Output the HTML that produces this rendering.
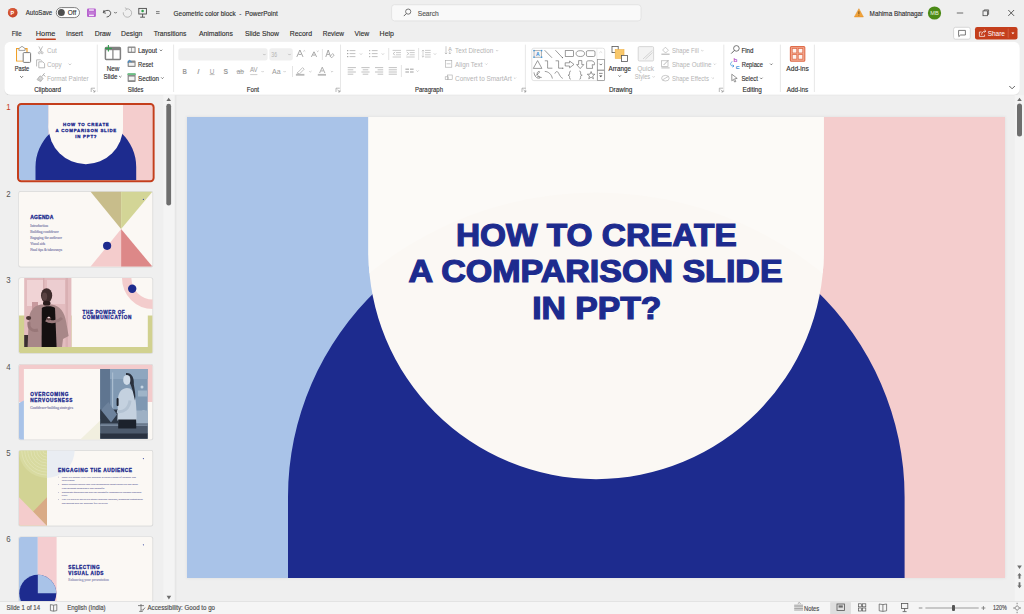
<!DOCTYPE html>
<html><head><meta charset="utf-8"><title>PowerPoint</title>
<style>
html,body{margin:0;padding:0;width:1024px;height:614px;overflow:hidden;background:#efefef;}
svg{display:block;font-family:"Liberation Sans",sans-serif;}
</style></head>
<body>
<svg width="1024" height="614" viewBox="0 0 1024 614">
<defs><filter id="rsh" x="-2%" y="-20%" width="104%" height="150%"><feDropShadow dx="0" dy="0.6" stdDeviation="0.7" flood-color="#000" flood-opacity="0.18"/></filter><filter id="ssh" x="-2%" y="-2%" width="104%" height="104%"><feGaussianBlur stdDeviation="0.8"/></filter><filter id="tsh" x="-5%" y="-5%" width="110%" height="112%"><feGaussianBlur stdDeviation="0.6"/></filter><radialGradient id="pplg" cx="0.35" cy="0.3" r="0.8"><stop offset="0" stop-color="#ff8a5c" stop-opacity="0.5"/><stop offset="1" stop-color="#b8321a" stop-opacity="0.2"/></radialGradient><clipPath id="archclip"><rect x="187.0" y="117.0" width="818.0" height="461.0"/></clipPath><clipPath id="topclip"><path d="M300,100 L900,100 L892,348.4 A359,359 0 0 0 300,348.4 Z"/></clipPath><clipPath id="c5l"><rect x="19" y="450" width="28" height="80"/></clipPath><clipPath id="tc0"><rect x="19.0" y="105.0" width="133.6" height="75.2" rx="1.5"/></clipPath><clipPath id="tc1"><rect x="19.0" y="191.6" width="133.6" height="75.2" rx="2"/></clipPath><clipPath id="tc2"><rect x="19.0" y="278.0" width="133.6" height="75.2" rx="2"/></clipPath><clipPath id="tc3"><rect x="19.0" y="364.5" width="133.6" height="75.2" rx="2"/></clipPath><clipPath id="tc4"><rect x="19.0" y="450.6" width="133.6" height="75.2" rx="2"/></clipPath><clipPath id="tc5"><rect x="19.0" y="537.0" width="133.6" height="64.79999999999995" rx="2"/></clipPath></defs>
<rect x="0.00" y="0.00" width="1024.00" height="614.00" rx="0" fill="#efefef" />
<circle cx="12.70" cy="12.70" r="4.80" fill="#c9472a" />
<circle cx="12.70" cy="12.70" r="4.80" fill="url(#pplg)" />
<text x="10.60" y="14.77" textLength="3.60" lengthAdjust="spacingAndGlyphs" xml:space="preserve" font-family="Liberation Sans" font-size="5.2" font-weight="bold" fill="#ffffff" >P</text>
<text x="25.80" y="15.29" textLength="26.40" lengthAdjust="spacingAndGlyphs" xml:space="preserve" font-family="Liberation Sans" font-size="7.2" font-weight="normal" fill="#303030" stroke="#303030" stroke-width="0.14">AutoSave</text>
<rect x="56.30" y="7.60" width="23.20" height="10.00" rx="5" fill="#ffffff" stroke="#5f5f5f" stroke-width="0.8"/>
<circle cx="61.30" cy="12.60" r="3.50" fill="#4f4f4f" />
<text x="67.80" y="15.25" textLength="8.40" lengthAdjust="spacingAndGlyphs" xml:space="preserve" font-family="Liberation Sans" font-size="6.8" font-weight="normal" fill="#303030" stroke="#303030" stroke-width="0.14">Off</text>
<rect x="87.00" y="8.40" width="8.90" height="8.60" rx="1.2" fill="#b763cf" />
<rect x="89.00" y="9.30" width="4.90" height="1.50" rx="0" fill="#f1dcf7" />
<rect x="88.20" y="11.50" width="6.50" height="2.50" rx="0" fill="#c27cd6" />
<rect x="89.00" y="14.60" width="4.90" height="1.50" rx="0" fill="#f6e8f9" />
<path d="M104.2,10.0 L103.2,12.6 L105.9,13.2" fill="none" stroke="#4a4a4a" stroke-width="0.9" />
<path d="M103.4,12.4 C106.0,9.2 111.4,9.8 110.6,13.8 C110.2,15.8 108.6,16.8 106.6,17.0" fill="none" stroke="#4a4a4a" stroke-width="0.9" />
<path d="M114.20,11.95 L115.50,13.25 L116.80,11.95" fill="none" stroke="#4a4a4a" stroke-width="0.8" />
<path d="M126.7,8.9 A4.2,4.2 0 1 1 123.3,12.3" fill="none" stroke="#a9a9a9" stroke-width="0.8" />
<path d="M124.9,7.7 L126.8,8.9 L125.3,10.6" fill="none" stroke="#a9a9a9" stroke-width="0.8" />
<rect x="138.80" y="8.40" width="7.60" height="5.60" rx="0" fill="none" stroke="#4a4a4a" stroke-width="0.9"/>
<circle cx="142.60" cy="11.00" r="1.30" fill="#2e9e4a" />
<line x1="142.60" y1="14.00" x2="142.60" y2="17.00" stroke="#4a4a4a" stroke-width="0.9" />
<line x1="140.20" y1="17.20" x2="145.00" y2="17.20" stroke="#4a4a4a" stroke-width="0.9" />
<line x1="156.00" y1="11.60" x2="159.60" y2="11.60" stroke="#4a4a4a" stroke-width="0.7" />
<line x1="156.00" y1="13.40" x2="159.60" y2="13.40" stroke="#4a4a4a" stroke-width="0.7" />
<text x="173.60" y="15.79" textLength="104.20" lengthAdjust="spacingAndGlyphs" xml:space="preserve" font-family="Liberation Sans" font-size="7.2" font-weight="normal" fill="#303030" stroke="#303030" stroke-width="0.14">Geometric color block  -  PowerPoint</text>
<rect x="391.60" y="4.70" width="249.40" height="16.20" rx="3" fill="#f9f9f9" stroke="#dcdcdc" stroke-width="0.7"/>
<circle cx="408.20" cy="11.60" r="2.60" fill="none" stroke="#555" stroke-width="0.8"/>
<line x1="406.30" y1="13.60" x2="403.80" y2="16.10" stroke="#555" stroke-width="0.9" />
<text x="417.70" y="15.52" textLength="21.10" lengthAdjust="spacingAndGlyphs" xml:space="preserve" font-family="Liberation Sans" font-size="7.0" font-weight="normal" fill="#555555" stroke="#555555" stroke-width="0.14">Search</text>
<path d="M858.9,8.7 L863.4,16.9 L854.4,16.9 Z" fill="#f2a33a" stroke="#e08a1e" stroke-width="0.5" />
<line x1="858.90" y1="11.30" x2="858.90" y2="14.30" stroke="#5a3a10" stroke-width="0.8" />
<circle cx="858.90" cy="15.60" r="0.45" fill="#5a3a10" />
<text x="869.60" y="15.69" textLength="53.60" lengthAdjust="spacingAndGlyphs" xml:space="preserve" font-family="Liberation Sans" font-size="7.2" font-weight="normal" fill="#303030" stroke="#303030" stroke-width="0.14">Mahima Bhatnagar</text>
<circle cx="934.50" cy="13.00" r="6.60" fill="#4b8a16" />
<text x="930.30" y="15.12" textLength="8.40" lengthAdjust="spacingAndGlyphs" xml:space="preserve" font-family="Liberation Sans" font-size="5.6" font-weight="normal" fill="#e8f3df" >MB</text>
<line x1="956.80" y1="13.00" x2="963.20" y2="13.00" stroke="#4a4a4a" stroke-width="0.8" />
<rect x="983.00" y="10.90" width="4.60" height="4.80" rx="0" fill="none" stroke="#4a4a4a" stroke-width="0.8"/>
<path d="M984.2,10.9 L984.2,9.9 L988.6,9.9 L988.6,14.4 L987.6,14.4" fill="none" stroke="#4a4a4a" stroke-width="0.8" />
<line x1="1008.30" y1="10.00" x2="1014.10" y2="15.90" stroke="#4a4a4a" stroke-width="0.9" />
<line x1="1014.10" y1="10.00" x2="1008.30" y2="15.90" stroke="#4a4a4a" stroke-width="0.9" />
<text x="11.70" y="36.26" textLength="10.00" lengthAdjust="spacingAndGlyphs" xml:space="preserve" font-family="Liberation Sans" font-size="7.4" font-weight="normal" fill="#303030" stroke="#303030" stroke-width="0.14">File</text>
<text x="35.80" y="36.26" textLength="19.50" lengthAdjust="spacingAndGlyphs" xml:space="preserve" font-family="Liberation Sans" font-size="7.4" font-weight="normal" fill="#303030" stroke="#303030" stroke-width="0.14">Home</text>
<text x="66.00" y="36.26" textLength="17.00" lengthAdjust="spacingAndGlyphs" xml:space="preserve" font-family="Liberation Sans" font-size="7.4" font-weight="normal" fill="#303030" stroke="#303030" stroke-width="0.14">Insert</text>
<text x="94.70" y="36.26" textLength="16.10" lengthAdjust="spacingAndGlyphs" xml:space="preserve" font-family="Liberation Sans" font-size="7.4" font-weight="normal" fill="#303030" stroke="#303030" stroke-width="0.14">Draw</text>
<text x="121.00" y="36.26" textLength="21.30" lengthAdjust="spacingAndGlyphs" xml:space="preserve" font-family="Liberation Sans" font-size="7.4" font-weight="normal" fill="#303030" stroke="#303030" stroke-width="0.14">Design</text>
<text x="153.70" y="36.26" textLength="32.70" lengthAdjust="spacingAndGlyphs" xml:space="preserve" font-family="Liberation Sans" font-size="7.4" font-weight="normal" fill="#303030" stroke="#303030" stroke-width="0.14">Transitions</text>
<text x="199.00" y="36.26" textLength="33.80" lengthAdjust="spacingAndGlyphs" xml:space="preserve" font-family="Liberation Sans" font-size="7.4" font-weight="normal" fill="#303030" stroke="#303030" stroke-width="0.14">Animations</text>
<text x="245.00" y="36.26" textLength="34.00" lengthAdjust="spacingAndGlyphs" xml:space="preserve" font-family="Liberation Sans" font-size="7.4" font-weight="normal" fill="#303030" stroke="#303030" stroke-width="0.14">Slide Show</text>
<text x="289.80" y="36.26" textLength="22.20" lengthAdjust="spacingAndGlyphs" xml:space="preserve" font-family="Liberation Sans" font-size="7.4" font-weight="normal" fill="#303030" stroke="#303030" stroke-width="0.14">Record</text>
<text x="322.70" y="36.26" textLength="21.30" lengthAdjust="spacingAndGlyphs" xml:space="preserve" font-family="Liberation Sans" font-size="7.4" font-weight="normal" fill="#303030" stroke="#303030" stroke-width="0.14">Review</text>
<text x="354.60" y="36.26" textLength="14.60" lengthAdjust="spacingAndGlyphs" xml:space="preserve" font-family="Liberation Sans" font-size="7.4" font-weight="normal" fill="#303030" stroke="#303030" stroke-width="0.14">View</text>
<text x="379.60" y="36.26" textLength="14.40" lengthAdjust="spacingAndGlyphs" xml:space="preserve" font-family="Liberation Sans" font-size="7.4" font-weight="normal" fill="#303030" stroke="#303030" stroke-width="0.14">Help</text>
<rect x="36.10" y="38.60" width="19.90" height="1.40" rx="0.7" fill="#c43e1c" />
<rect x="953.60" y="27.30" width="16.70" height="11.90" rx="2" fill="#ffffff" stroke="#c9c9c9" stroke-width="0.7"/>
<path d="M958.6,30.4 L965.4,30.4 L965.4,35.0 L960.6,35.0 L958.8,36.6 L958.8,35.0 L958.6,35.0 Z" fill="none" stroke="#444" stroke-width="0.7" />
<rect x="975.00" y="27.00" width="42.50" height="12.50" rx="2.2" fill="#c43e1c" />
<path d="M981.6,32.0 L979.4,32.0 L979.4,36.4 L984.6,36.4 L984.6,34.6" fill="none" stroke="#ffffff" stroke-width="0.7" />
<path d="M981.6,34.8 C981.8,32.2 983.2,31.2 985.6,31.2 M984.4,29.8 L985.8,31.2 L984.4,32.6" fill="none" stroke="#ffffff" stroke-width="0.7" />
<text x="987.70" y="36.06" textLength="17.30" lengthAdjust="spacingAndGlyphs" xml:space="preserve" font-family="Liberation Sans" font-size="7.4" font-weight="normal" fill="#ffffff" >Share</text>
<line x1="1008.20" y1="28.60" x2="1008.20" y2="37.80" stroke="#d9735a" stroke-width="0.6" />
<path d="M1011.4,32.6 L1012.9,34.2 L1014.4,32.6 Z" fill="#ffffff" stroke="none" stroke-width="1" />
<rect x="4.4" y="41.7" width="1015.4" height="53.1" rx="6" fill="#ffffff" filter="url(#rsh)"/>
<line x1="97.30" y1="44.60" x2="97.30" y2="92.00" stroke="#e1e1e1" stroke-width="0.8" />
<line x1="173.60" y1="44.60" x2="173.60" y2="92.00" stroke="#e1e1e1" stroke-width="0.8" />
<line x1="340.50" y1="44.60" x2="340.50" y2="92.00" stroke="#e1e1e1" stroke-width="0.8" />
<line x1="525.40" y1="44.60" x2="525.40" y2="92.00" stroke="#e1e1e1" stroke-width="0.8" />
<line x1="723.80" y1="44.60" x2="723.80" y2="92.00" stroke="#e1e1e1" stroke-width="0.8" />
<line x1="780.40" y1="44.60" x2="780.40" y2="92.00" stroke="#e1e1e1" stroke-width="0.8" />
<line x1="814.40" y1="44.60" x2="814.40" y2="92.00" stroke="#e1e1e1" stroke-width="0.8" />
<text x="34.20" y="92.12" textLength="26.90" lengthAdjust="spacingAndGlyphs" xml:space="preserve" font-family="Liberation Sans" font-size="7.0" font-weight="normal" fill="#303030" stroke="#303030" stroke-width="0.14">Clipboard</text>
<text x="127.70" y="92.12" textLength="15.70" lengthAdjust="spacingAndGlyphs" xml:space="preserve" font-family="Liberation Sans" font-size="7.0" font-weight="normal" fill="#303030" stroke="#303030" stroke-width="0.14">Slides</text>
<text x="246.70" y="92.12" textLength="12.40" lengthAdjust="spacingAndGlyphs" xml:space="preserve" font-family="Liberation Sans" font-size="7.0" font-weight="normal" fill="#303030" stroke="#303030" stroke-width="0.14">Font</text>
<text x="415.00" y="92.12" textLength="28.00" lengthAdjust="spacingAndGlyphs" xml:space="preserve" font-family="Liberation Sans" font-size="7.0" font-weight="normal" fill="#303030" stroke="#303030" stroke-width="0.14">Paragraph</text>
<text x="609.00" y="92.12" textLength="23.40" lengthAdjust="spacingAndGlyphs" xml:space="preserve" font-family="Liberation Sans" font-size="7.0" font-weight="normal" fill="#303030" stroke="#303030" stroke-width="0.14">Drawing</text>
<text x="742.50" y="92.12" textLength="19.40" lengthAdjust="spacingAndGlyphs" xml:space="preserve" font-family="Liberation Sans" font-size="7.0" font-weight="normal" fill="#303030" stroke="#303030" stroke-width="0.14">Editing</text>
<text x="786.70" y="92.12" textLength="21.50" lengthAdjust="spacingAndGlyphs" xml:space="preserve" font-family="Liberation Sans" font-size="7.0" font-weight="normal" fill="#303030" stroke="#303030" stroke-width="0.14">Add-ins</text>
<path d="M91.2,92.0 L91.2,88.2 L95.0,88.2" fill="none" stroke="#8a8a8a" stroke-width="0.6" />
<path d="M92.6,89.6 L95.0,92.0 M95.0,90.2 L95.0,92.0 L93.2,92.0" fill="none" stroke="#8a8a8a" stroke-width="0.6" />
<path d="M336.0,92.0 L336.0,88.2 L339.8,88.2" fill="none" stroke="#8a8a8a" stroke-width="0.6" />
<path d="M337.4,89.6 L339.8,92.0 M339.8,90.2 L339.8,92.0 L338.0,92.0" fill="none" stroke="#8a8a8a" stroke-width="0.6" />
<path d="M522.0,92.0 L522.0,88.2 L525.8,88.2" fill="none" stroke="#8a8a8a" stroke-width="0.6" />
<path d="M523.4,89.6 L525.8,92.0 M525.8,90.2 L525.8,92.0 L524.0,92.0" fill="none" stroke="#8a8a8a" stroke-width="0.6" />
<path d="M719.3,92.0 L719.3,88.2 L723.1,88.2" fill="none" stroke="#8a8a8a" stroke-width="0.6" />
<path d="M720.7,89.6 L723.1,92.0 M723.1,90.2 L723.1,92.0 L721.3,92.0" fill="none" stroke="#8a8a8a" stroke-width="0.6" />
<path d="M1009.3,86.0 L1012.1,88.8 L1014.9,86.0" fill="none" stroke="#555" stroke-width="0.9" />
<path d="M19.6,48.6 L16.6,48.6 L16.6,61.0 L23.2,61.0" fill="none" stroke="#f0a028" stroke-width="1.2" />
<path d="M24.4,48.6 L27.0,48.6 L27.0,52.6" fill="none" stroke="#f0a028" stroke-width="1.2" />
<rect x="17.20" y="49.20" width="5.80" height="11.20" rx="0" fill="#fafafa" />
<path d="M18.9,50.4 L18.9,48.6 L22.0,46.3 L25.1,48.6 L25.1,50.4 Z" fill="#ffffff" stroke="#8a8a8a" stroke-width="0.8" />
<rect x="23.20" y="52.60" width="7.40" height="9.80" rx="0.9" fill="#ffffff" stroke="#7a7a7a" stroke-width="1.0"/>
<text x="14.70" y="71.32" textLength="14.60" lengthAdjust="spacingAndGlyphs" xml:space="preserve" font-family="Liberation Sans" font-size="7.0" font-weight="normal" fill="#303030" stroke="#303030" stroke-width="0.14">Paste</text>
<path d="M20.20,76.20 L21.60,77.60 L23.00,76.20" fill="none" stroke="#444" stroke-width="0.8" />
<circle cx="39.30" cy="52.80" r="1.00" fill="none" stroke="#a8a8a8" stroke-width="0.7"/>
<circle cx="42.10" cy="52.80" r="1.00" fill="none" stroke="#a8a8a8" stroke-width="0.7"/>
<line x1="38.80" y1="46.40" x2="41.60" y2="51.90" stroke="#a8a8a8" stroke-width="0.7" />
<line x1="42.60" y1="46.40" x2="39.80" y2="51.90" stroke="#a8a8a8" stroke-width="0.7" />
<text x="46.90" y="53.02" textLength="9.80" lengthAdjust="spacingAndGlyphs" xml:space="preserve" font-family="Liberation Sans" font-size="7.0" font-weight="normal" fill="#b4b4b4" >Cut</text>
<path d="M36.6,66.4 L36.6,59.8 L40.6,59.8 L41.6,60.8" fill="none" stroke="#a8a8a8" stroke-width="0.8" />
<path d="M38.8,61.8 L42.8,61.8 L44.6,63.6 L44.6,67.8 L38.8,67.8 Z" fill="none" stroke="#a8a8a8" stroke-width="0.8" />
<text x="46.90" y="66.92" textLength="14.70" lengthAdjust="spacingAndGlyphs" xml:space="preserve" font-family="Liberation Sans" font-size="7.0" font-weight="normal" fill="#b4b4b4" >Copy</text>
<path d="M68.60,63.65 L69.90,64.95 L71.20,63.65" fill="none" stroke="#b0b0b0" stroke-width="0.7" />
<path d="M37.0,79.6 L40.0,75.8 L43.2,78.4 L40.6,81.6 Z" fill="#d6d6d6" stroke="#a8a8a8" stroke-width="0.7" />
<path d="M41.6,76.8 L44.6,73.2 M43.2,74.6 L45.4,76.4" fill="none" stroke="#a8a8a8" stroke-width="0.9" />
<line x1="38.00" y1="78.60" x2="41.20" y2="80.80" stroke="#a8a8a8" stroke-width="0.5" />
<text x="46.90" y="80.52" textLength="41.60" lengthAdjust="spacingAndGlyphs" xml:space="preserve" font-family="Liberation Sans" font-size="7.0" font-weight="normal" fill="#b4b4b4" >Format Painter</text>
<rect x="105.40" y="47.60" width="15.00" height="11.80" rx="0.8" fill="#ffffff" stroke="#808080" stroke-width="1.5"/>
<rect x="105.40" y="47.60" width="15.00" height="2.60" rx="0" fill="#808080" />
<line x1="112.90" y1="50.00" x2="112.90" y2="59.40" stroke="#808080" stroke-width="1.2" />
<line x1="108.40" y1="45.00" x2="108.40" y2="51.60" stroke="#2f9e4c" stroke-width="1.1" />
<line x1="105.00" y1="48.40" x2="111.80" y2="48.40" stroke="#2f9e4c" stroke-width="1.1" />
<text x="106.70" y="70.82" textLength="12.70" lengthAdjust="spacingAndGlyphs" xml:space="preserve" font-family="Liberation Sans" font-size="7.0" font-weight="normal" fill="#303030" stroke="#303030" stroke-width="0.14">New</text>
<text x="103.60" y="79.12" textLength="13.80" lengthAdjust="spacingAndGlyphs" xml:space="preserve" font-family="Liberation Sans" font-size="7.0" font-weight="normal" fill="#303030" stroke="#303030" stroke-width="0.14">Slide</text>
<path d="M119.10,76.00 L120.30,77.20 L121.50,76.00" fill="none" stroke="#444" stroke-width="0.7" />
<rect x="127.60" y="46.60" width="8.00" height="6.40" rx="0.8" fill="#8a8a8a" />
<rect x="128.80" y="47.90" width="2.50" height="3.80" rx="0" fill="#f2f2f2" />
<rect x="132.00" y="47.90" width="2.50" height="3.80" rx="0" fill="#f2f2f2" />
<text x="138.00" y="53.02" textLength="19.00" lengthAdjust="spacingAndGlyphs" xml:space="preserve" font-family="Liberation Sans" font-size="7.0" font-weight="normal" fill="#303030" stroke="#303030" stroke-width="0.14">Layout</text>
<path d="M159.80,49.70 L161.00,50.90 L162.20,49.70" fill="none" stroke="#444" stroke-width="0.7" />
<rect x="127.60" y="60.60" width="8.00" height="6.40" rx="0.8" fill="#8a8a8a" />
<rect x="128.80" y="62.80" width="5.70" height="3.00" rx="0" fill="#f2f2f2" />
<path d="M128.0,62.8 L129.4,60.2 L131.6,62.0" fill="none" stroke="#2b88d8" stroke-width="1.0" />
<text x="138.00" y="66.82" textLength="15.10" lengthAdjust="spacingAndGlyphs" xml:space="preserve" font-family="Liberation Sans" font-size="7.0" font-weight="normal" fill="#303030" stroke="#303030" stroke-width="0.14">Reset</text>
<rect x="127.60" y="73.40" width="8.00" height="8.60" rx="0.8" fill="#8a8a8a" />
<rect x="127.60" y="73.20" width="8.00" height="1.80" rx="0" fill="#6cc285" />
<rect x="128.80" y="76.60" width="5.70" height="3.60" rx="0" fill="#f2f2f2" />
<text x="138.00" y="80.52" textLength="21.00" lengthAdjust="spacingAndGlyphs" xml:space="preserve" font-family="Liberation Sans" font-size="7.0" font-weight="normal" fill="#303030" stroke="#303030" stroke-width="0.14">Section</text>
<path d="M161.20,77.40 L162.40,78.60 L163.60,77.40" fill="none" stroke="#444" stroke-width="0.7" />
<rect x="178.30" y="48.30" width="89.30" height="12.10" rx="2.5" fill="#efefef" />
<path d="M263.20,53.90 L264.40,55.10 L265.60,53.90" fill="none" stroke="#a0a0a0" stroke-width="0.6" />
<rect x="269.30" y="48.30" width="23.50" height="12.10" rx="2.5" fill="#efefef" />
<text x="271.30" y="56.88" textLength="5.70" lengthAdjust="spacingAndGlyphs" xml:space="preserve" font-family="Liberation Sans" font-size="6.6" font-weight="normal" fill="#b4b4b4" >36</text>
<path d="M288.30,53.90 L289.50,55.10 L290.70,53.90" fill="none" stroke="#a0a0a0" stroke-width="0.6" />
<path d="M296.80,56.90 L299.90,50.00 L303.00,56.90 M298.53,54.42 L301.27,54.42" fill="none" stroke="#8a8a8a" stroke-width="0.75" />
<path d="M303.4,51.4 L304.3,50.6 L305.2,51.4" fill="none" stroke="#8a8a8a" stroke-width="0.5" />
<path d="M311.40,56.90 L314.00,51.80 L316.60,56.90 M312.85,55.06 L315.15,55.06" fill="none" stroke="#8a8a8a" stroke-width="0.75" />
<path d="M316.8,50.8 L317.7,51.6 L318.6,50.8" fill="none" stroke="#8a8a8a" stroke-width="0.5" />
<line x1="322.40" y1="49.00" x2="322.40" y2="60.00" stroke="#d9d9d9" stroke-width="0.7" />
<path d="M325.80,56.90 L328.20,50.00 L330.60,56.90 M327.14,54.42 L329.26,54.42" fill="none" stroke="#8a8a8a" stroke-width="0.75" />
<path d="M330.2,56.4 L332.6,53.6 L334.2,55.0 L331.8,57.8 Z" fill="#ffffff" stroke="#8a8a8a" stroke-width="0.6" />
<text x="182.60" y="73.99" textLength="4.40" lengthAdjust="spacingAndGlyphs" xml:space="preserve" font-family="Liberation Sans" font-size="7.2" font-weight="bold" fill="#9a9a9a" >B</text>
<text x="197.00" y="73.99" textLength="2.60" lengthAdjust="spacingAndGlyphs" xml:space="preserve" font-family="Liberation Sans" font-size="7.2" font-weight="normal" fill="#9a9a9a" font-style="italic">I</text>
<text x="209.80" y="73.59" textLength="4.60" lengthAdjust="spacingAndGlyphs" xml:space="preserve" font-family="Liberation Sans" font-size="7.2" font-weight="normal" fill="#9a9a9a" >U</text>
<line x1="209.60" y1="74.60" x2="214.60" y2="74.60" stroke="#9a9a9a" stroke-width="0.6" />
<text x="223.40" y="73.99" textLength="4.60" lengthAdjust="spacingAndGlyphs" xml:space="preserve" font-family="Liberation Sans" font-size="7.2" font-weight="bold" fill="#9a9a9a" >S</text>
<text x="236.80" y="73.90" textLength="7.00" lengthAdjust="spacingAndGlyphs" xml:space="preserve" font-family="Liberation Sans" font-size="6.4" font-weight="normal" fill="#9a9a9a" >ab</text>
<line x1="236.40" y1="71.40" x2="244.20" y2="71.40" stroke="#9a9a9a" stroke-width="0.6" />
<text x="250.00" y="72.45" textLength="7.60" lengthAdjust="spacingAndGlyphs" xml:space="preserve" font-family="Liberation Sans" font-size="6.8" font-weight="normal" fill="#9a9a9a" >AV</text>
<path d="M250.2,74.6 L257.4,74.6" fill="none" stroke="#9a9a9a" stroke-width="0.5" />
<path d="M261.50,71.05 L262.60,72.15 L263.70,71.05" fill="none" stroke="#b0b0b0" stroke-width="0.6" />
<text x="272.00" y="73.92" textLength="8.60" lengthAdjust="spacingAndGlyphs" xml:space="preserve" font-family="Liberation Sans" font-size="7.0" font-weight="normal" fill="#9a9a9a" >Aa</text>
<path d="M283.50,71.05 L284.60,72.15 L285.70,71.05" fill="none" stroke="#b0b0b0" stroke-width="0.6" />
<line x1="292.50" y1="66.00" x2="292.50" y2="77.00" stroke="#d9d9d9" stroke-width="0.7" />
<path d="M297.6,72.6 L302.6,67.6 L304.2,69.2 L299.2,74.2 Z" fill="#ffffff" stroke="#9a9a9a" stroke-width="0.6" />
<path d="M297.6,72.6 L296.6,73.6 L298.2,73.6 Z" fill="#9a9a9a" stroke="none" stroke-width="1" />
<rect x="295.90" y="73.90" width="8.50" height="1.80" rx="0" fill="#b8b8b8" />
<path d="M309.30,71.05 L310.40,72.15 L311.50,71.05" fill="none" stroke="#b0b0b0" stroke-width="0.6" />
<path d="M319.60,73.00 L322.25,67.20 L324.90,73.00 M321.08,70.91 L323.42,70.91" fill="none" stroke="#9a9a9a" stroke-width="0.8" />
<rect x="317.80" y="73.90" width="8.20" height="1.80" rx="0" fill="#b8b8b8" />
<path d="M330.90,71.05 L332.00,72.15 L333.10,71.05" fill="none" stroke="#b0b0b0" stroke-width="0.6" />
<rect x="347.00" y="50.00" width="1.30" height="1.20" rx="0" fill="#a8a8a8" />
<line x1="349.60" y1="50.60" x2="355.40" y2="50.60" stroke="#a8a8a8" stroke-width="0.7" />
<rect x="347.00" y="53.00" width="1.30" height="1.20" rx="0" fill="#a8a8a8" />
<line x1="349.60" y1="53.60" x2="355.40" y2="53.60" stroke="#a8a8a8" stroke-width="0.7" />
<rect x="347.00" y="56.00" width="1.30" height="1.20" rx="0" fill="#a8a8a8" />
<line x1="349.60" y1="56.60" x2="355.40" y2="56.60" stroke="#a8a8a8" stroke-width="0.7" />
<path d="M359.90,53.45 L361.00,54.55 L362.10,53.45" fill="none" stroke="#b0b0b0" stroke-width="0.6" />
<rect x="369.20" y="50.00" width="1.00" height="1.20" rx="0" fill="#a8a8a8" />
<line x1="371.80" y1="50.60" x2="377.60" y2="50.60" stroke="#a8a8a8" stroke-width="0.7" />
<rect x="369.20" y="53.00" width="1.00" height="1.20" rx="0" fill="#a8a8a8" />
<line x1="371.80" y1="53.60" x2="377.60" y2="53.60" stroke="#a8a8a8" stroke-width="0.7" />
<rect x="369.20" y="56.00" width="1.00" height="1.20" rx="0" fill="#a8a8a8" />
<line x1="371.80" y1="56.60" x2="377.60" y2="56.60" stroke="#a8a8a8" stroke-width="0.7" />
<path d="M381.80,53.45 L382.90,54.55 L384.00,53.45" fill="none" stroke="#b0b0b0" stroke-width="0.6" />
<line x1="388.70" y1="48.00" x2="388.70" y2="60.00" stroke="#d9d9d9" stroke-width="0.7" />
<line x1="392.60" y1="50.40" x2="401.00" y2="50.40" stroke="#a8a8a8" stroke-width="0.6" />
<line x1="396.00" y1="52.60" x2="401.00" y2="52.60" stroke="#a8a8a8" stroke-width="0.6" />
<line x1="396.00" y1="54.80" x2="401.00" y2="54.80" stroke="#a8a8a8" stroke-width="0.6" />
<line x1="392.60" y1="57.00" x2="401.00" y2="57.00" stroke="#a8a8a8" stroke-width="0.6" />
<path d="M395.2,52.0 L393.0,53.6 L395.2,55.2" fill="none" stroke="#a8a8a8" stroke-width="0.6" />
<line x1="406.30" y1="50.40" x2="414.70" y2="50.40" stroke="#a8a8a8" stroke-width="0.6" />
<line x1="409.70" y1="52.60" x2="414.70" y2="52.60" stroke="#a8a8a8" stroke-width="0.6" />
<line x1="409.70" y1="54.80" x2="414.70" y2="54.80" stroke="#a8a8a8" stroke-width="0.6" />
<line x1="406.30" y1="57.00" x2="414.70" y2="57.00" stroke="#a8a8a8" stroke-width="0.6" />
<path d="M406.7,52.0 L408.9,53.6 L406.7,55.2" fill="none" stroke="#a8a8a8" stroke-width="0.6" />
<line x1="418.60" y1="48.00" x2="418.60" y2="60.00" stroke="#d9d9d9" stroke-width="0.7" />
<line x1="425.00" y1="50.40" x2="430.70" y2="50.40" stroke="#a8a8a8" stroke-width="0.6" />
<line x1="425.00" y1="52.60" x2="430.70" y2="52.60" stroke="#a8a8a8" stroke-width="0.6" />
<line x1="425.00" y1="54.80" x2="430.70" y2="54.80" stroke="#a8a8a8" stroke-width="0.6" />
<line x1="425.00" y1="57.00" x2="430.70" y2="57.00" stroke="#a8a8a8" stroke-width="0.6" />
<path d="M421.8,51.2 L423.0,50.0 L424.2,51.2 M423.0,50.0 L423.0,57.2 M421.8,56.0 L423.0,57.2 L424.2,56.0" fill="none" stroke="#a8a8a8" stroke-width="0.5" />
<path d="M433.90,53.45 L435.00,54.55 L436.10,53.45" fill="none" stroke="#b0b0b0" stroke-width="0.6" />
<line x1="347.70" y1="67.60" x2="355.90" y2="67.60" stroke="#a8a8a8" stroke-width="0.7" />
<line x1="347.70" y1="69.80" x2="353.30" y2="69.80" stroke="#a8a8a8" stroke-width="0.7" />
<line x1="347.70" y1="72.00" x2="355.90" y2="72.00" stroke="#a8a8a8" stroke-width="0.7" />
<line x1="347.70" y1="74.20" x2="353.30" y2="74.20" stroke="#a8a8a8" stroke-width="0.7" />
<line x1="361.40" y1="67.60" x2="369.60" y2="67.60" stroke="#a8a8a8" stroke-width="0.7" />
<line x1="362.70" y1="69.80" x2="368.30" y2="69.80" stroke="#a8a8a8" stroke-width="0.7" />
<line x1="361.40" y1="72.00" x2="369.60" y2="72.00" stroke="#a8a8a8" stroke-width="0.7" />
<line x1="362.70" y1="74.20" x2="368.30" y2="74.20" stroke="#a8a8a8" stroke-width="0.7" />
<line x1="375.00" y1="67.60" x2="383.20" y2="67.60" stroke="#a8a8a8" stroke-width="0.7" />
<line x1="377.60" y1="69.80" x2="383.20" y2="69.80" stroke="#a8a8a8" stroke-width="0.7" />
<line x1="375.00" y1="72.00" x2="383.20" y2="72.00" stroke="#a8a8a8" stroke-width="0.7" />
<line x1="377.60" y1="74.20" x2="383.20" y2="74.20" stroke="#a8a8a8" stroke-width="0.7" />
<line x1="388.70" y1="67.60" x2="396.90" y2="67.60" stroke="#a8a8a8" stroke-width="0.7" />
<line x1="388.70" y1="69.80" x2="396.90" y2="69.80" stroke="#a8a8a8" stroke-width="0.7" />
<line x1="388.70" y1="72.00" x2="396.90" y2="72.00" stroke="#a8a8a8" stroke-width="0.7" />
<line x1="388.70" y1="74.20" x2="396.90" y2="74.20" stroke="#a8a8a8" stroke-width="0.7" />
<line x1="401.40" y1="65.00" x2="401.40" y2="77.00" stroke="#d9d9d9" stroke-width="0.7" />
<rect x="405.40" y="68.60" width="3.60" height="1.20" rx="0" fill="#b0b0b0" />
<rect x="410.00" y="68.60" width="3.60" height="1.20" rx="0" fill="#b0b0b0" />
<rect x="405.40" y="71.40" width="3.60" height="1.20" rx="0" fill="#b0b0b0" />
<rect x="410.00" y="71.40" width="3.60" height="1.20" rx="0" fill="#b0b0b0" />
<path d="M416.50,70.45 L417.60,71.55 L418.70,70.45" fill="none" stroke="#b0b0b0" stroke-width="0.6" />
<path d="M446.0,46.2 L446.0,54.0 M444.8,52.8 L446.0,54.0 L447.2,52.8" fill="none" stroke="#a8a8a8" stroke-width="0.6" />
<text x="448.20" y="50.80" textLength="3.60" lengthAdjust="spacingAndGlyphs" xml:space="preserve" font-family="Liberation Sans" font-size="5.0" font-weight="normal" fill="#a8a8a8" >A</text>
<path d="M449.8,50.8 L449.8,54.0 M448.6,52.8 L449.8,54.0 L451.0,52.8" fill="none" stroke="#a8a8a8" stroke-width="0.6" />
<text x="455.10" y="53.02" textLength="38.10" lengthAdjust="spacingAndGlyphs" xml:space="preserve" font-family="Liberation Sans" font-size="7.0" font-weight="normal" fill="#b4b4b4" >Text Direction</text>
<path d="M496.00,50.05 L497.10,51.15 L498.20,50.05" fill="none" stroke="#b8b8b8" stroke-width="0.6" />
<rect x="445.40" y="60.40" width="6.40" height="6.80" rx="0" fill="none" stroke="#a8a8a8" stroke-width="0.6"/>
<line x1="446.60" y1="63.80" x2="450.60" y2="63.80" stroke="#a8a8a8" stroke-width="0.6" />
<text x="455.10" y="66.52" textLength="27.40" lengthAdjust="spacingAndGlyphs" xml:space="preserve" font-family="Liberation Sans" font-size="7.0" font-weight="normal" fill="#b4b4b4" >Align Text</text>
<path d="M485.30,63.55 L486.40,64.65 L487.50,63.55" fill="none" stroke="#b8b8b8" stroke-width="0.6" />
<rect x="447.60" y="75.00" width="4.60" height="4.60" rx="0" fill="none" stroke="#a8a8a8" stroke-width="0.6"/>
<rect x="445.20" y="76.80" width="3.00" height="2.80" rx="0" fill="none" stroke="#a8a8a8" stroke-width="0.6"/>
<text x="455.10" y="80.52" textLength="56.70" lengthAdjust="spacingAndGlyphs" xml:space="preserve" font-family="Liberation Sans" font-size="7.0" font-weight="normal" fill="#b4b4b4" >Convert to SmartArt</text>
<path d="M513.90,77.55 L515.00,78.65 L516.10,77.55" fill="none" stroke="#b8b8b8" stroke-width="0.6" />
<rect x="531.80" y="48.20" width="72.90" height="32.40" rx="2" fill="#ffffff" stroke="#d6d6d6" stroke-width="0.7"/>
<line x1="596.90" y1="48.40" x2="596.90" y2="80.40" stroke="#e2e2e2" stroke-width="0.6" />
<rect x="597.40" y="59.40" width="7.00" height="10.60" rx="0" fill="#ffffff" stroke="#8a8a8a" stroke-width="0.7"/>
<rect x="597.40" y="70.40" width="7.00" height="10.00" rx="0" fill="#ffffff" stroke="#8a8a8a" stroke-width="0.7"/>
<path d="M599.4,52.8 L600.8,51.6 L602.2,52.8" fill="none" stroke="#c8c8c8" stroke-width="0.6" />
<path d="M599.50,63.75 L600.80,65.05 L602.10,63.75" fill="none" stroke="#444" stroke-width="0.7" />
<line x1="599.00" y1="73.40" x2="602.60" y2="73.40" stroke="#444" stroke-width="0.6" />
<path d="M599.2,75.6 L600.8,77.2 L602.4,75.6 Z" fill="#444" stroke="none" stroke-width="1" />
<rect x="534.00" y="50.60" width="7.60" height="6.60" rx="0" fill="#f4f4f4" stroke="#8a8a8a" stroke-width="0.6"/>
<rect x="533.30" y="49.90" width="1.40" height="1.40" rx="0" fill="#3a96dd" />
<rect x="540.90" y="49.90" width="1.40" height="1.40" rx="0" fill="#3a96dd" />
<rect x="533.30" y="56.50" width="1.40" height="1.40" rx="0" fill="#3a96dd" />
<rect x="540.90" y="56.50" width="1.40" height="1.40" rx="0" fill="#3a96dd" />
<text x="536.00" y="55.56" textLength="3.60" lengthAdjust="spacingAndGlyphs" xml:space="preserve" font-family="Liberation Sans" font-size="4.6" font-weight="bold" fill="#2b88d8" >A</text>
<line x1="544.60" y1="50.20" x2="552.00" y2="57.80" stroke="#5a5a5a" stroke-width="0.6" />
<line x1="555.40" y1="50.20" x2="562.20" y2="57.40" stroke="#5a5a5a" stroke-width="0.6" />
<circle cx="562.40" cy="57.60" r="0.60" fill="#5a5a5a" />
<rect x="565.20" y="50.70" width="8.40" height="5.80" rx="0" fill="none" stroke="#5a5a5a" stroke-width="0.6"/>
<ellipse cx="580.3" cy="53.6" rx="4.2" ry="2.9" fill="none" stroke="#5a5a5a" stroke-width="0.6"/>
<rect x="586.40" y="50.70" width="8.60" height="5.80" rx="1.4" fill="none" stroke="#5a5a5a" stroke-width="0.6"/>
<path d="M537.6,60.6 L541.9,68.4 L533.3,68.4 Z" fill="none" stroke="#5a5a5a" stroke-width="0.6" />
<path d="M544.8,60.8 L547.6,60.8 L547.6,68.2 L552.4,68.2" fill="none" stroke="#5a5a5a" stroke-width="0.6" />
<path d="M555.6,60.8 L558.6,60.8 L558.6,68.2 L562.6,68.2" fill="none" stroke="#5a5a5a" stroke-width="0.6" />
<circle cx="562.80" cy="68.20" r="0.60" fill="#5a5a5a" />
<path d="M565.2,62.8 L569.6,62.8 L569.6,61.0 L574.0,64.4 L569.6,67.8 L569.6,66.0 L565.2,66.0 Z" fill="none" stroke="#5a5a5a" stroke-width="0.6" />
<path d="M578.6,60.6 L581.8,60.6 L581.8,64.6 L583.8,64.6 L580.2,68.6 L576.6,64.6 L578.6,64.6 Z" fill="none" stroke="#5a5a5a" stroke-width="0.6" />
<path d="M586.6,68.4 L586.6,62.4 C586.6,61.2 587.4,60.8 588.4,60.8 L592.0,60.8 C594.4,61.4 595.0,63.6 594.2,65.0 L592.2,64.6 L592.6,68.4 Z" fill="none" stroke="#5a5a5a" stroke-width="0.6" />
<path d="M534.0,72.4 C534.6,76.4 536.6,78.6 539.4,78.2 C541.4,77.6 538.6,76.0 537.0,77.0 M535.6,75.6 C538.0,74.0 540.6,71.8 539.2,71.4 C537.6,71.2 536.4,73.6 537.6,75.2 C539.0,77.0 541.4,77.8 541.8,77.4" fill="none" stroke="#5a5a5a" stroke-width="0.6" />
<path d="M544.8,71.4 C548.4,71.6 551.6,74.2 552.4,78.6" fill="none" stroke="#5a5a5a" stroke-width="0.6" />
<path d="M554.8,73.6 C556.0,71.2 557.4,70.8 558.6,73.2 C559.8,75.6 561.2,78.0 562.8,78.4" fill="none" stroke="#5a5a5a" stroke-width="0.6" />
<path d="M570.8,71.0 C569.2,71.0 569.6,73.0 569.6,74.0 C569.6,74.8 568.8,75.2 568.0,75.2 C568.8,75.2 569.6,75.6 569.6,76.6 C569.6,77.6 569.2,79.2 570.8,79.2" fill="none" stroke="#5a5a5a" stroke-width="0.6" />
<path d="M579.4,71.0 C581.0,71.0 580.6,73.0 580.6,74.0 C580.6,74.8 581.4,75.2 582.2,75.2 C581.4,75.2 580.6,75.6 580.6,76.6 C580.6,77.6 581.0,79.2 579.4,79.2" fill="none" stroke="#5a5a5a" stroke-width="0.6" />
<path d="M591.10,71.50 L592.10,74.12 L594.90,74.26 L592.72,76.03 L593.45,78.74 L591.10,77.20 L588.75,78.74 L589.48,76.03 L587.30,74.26 L590.10,74.12 Z" fill="none" stroke="#5a5a5a" stroke-width="0.6" />
<rect x="612.00" y="46.40" width="6.20" height="6.20" rx="0" fill="#ffffff" stroke="#555" stroke-width="0.8"/>
<rect x="615.20" y="49.60" width="8.80" height="8.80" rx="0" fill="#f8c86c" stroke="#f0b040" stroke-width="0.6"/>
<rect x="621.40" y="55.40" width="6.00" height="6.00" rx="0" fill="#ffffff" stroke="#555" stroke-width="0.8"/>
<text x="608.60" y="70.82" textLength="22.30" lengthAdjust="spacingAndGlyphs" xml:space="preserve" font-family="Liberation Sans" font-size="7.0" font-weight="normal" fill="#303030" stroke="#303030" stroke-width="0.14">Arrange</text>
<path d="M618.50,75.40 L619.70,76.60 L620.90,75.40" fill="none" stroke="#444" stroke-width="0.7" />
<rect x="638.20" y="46.60" width="15.40" height="14.40" rx="1.2" fill="#f3f3f3" stroke="#c9c9c9" stroke-width="0.7"/>
<path d="M643.0,59.0 L652.4,50.4 M645.4,59.2 L652.6,52.6" fill="none" stroke="#c4c4c4" stroke-width="0.7" />
<text x="637.30" y="70.82" textLength="16.60" lengthAdjust="spacingAndGlyphs" xml:space="preserve" font-family="Liberation Sans" font-size="7.0" font-weight="normal" fill="#b4b4b4" >Quick</text>
<text x="634.80" y="79.22" textLength="15.40" lengthAdjust="spacingAndGlyphs" xml:space="preserve" font-family="Liberation Sans" font-size="7.0" font-weight="normal" fill="#b4b4b4" >Styles</text>
<path d="M652.50,76.25 L653.60,77.35 L654.70,76.25" fill="none" stroke="#b8b8b8" stroke-width="0.6" />
<path d="M662.6,50.0 L665.4,47.2 L668.4,50.2 L665.6,53.0 Z" fill="none" stroke="#a8a8a8" stroke-width="0.6" />
<rect x="661.40" y="53.60" width="8.20" height="1.20" rx="0" fill="#b8b8b8" />
<text x="671.90" y="53.02" textLength="26.90" lengthAdjust="spacingAndGlyphs" xml:space="preserve" font-family="Liberation Sans" font-size="7.0" font-weight="normal" fill="#b4b4b4" >Shape Fill</text>
<path d="M701.20,50.05 L702.30,51.15 L703.40,50.05" fill="none" stroke="#b8b8b8" stroke-width="0.6" />
<rect x="661.60" y="60.80" width="6.40" height="5.60" rx="0" fill="none" stroke="#a8a8a8" stroke-width="0.6"/>
<line x1="663.60" y1="65.00" x2="668.60" y2="60.00" stroke="#a8a8a8" stroke-width="0.8" />
<rect x="661.40" y="67.40" width="8.20" height="1.00" rx="0" fill="#b8b8b8" />
<text x="671.90" y="66.52" textLength="39.60" lengthAdjust="spacingAndGlyphs" xml:space="preserve" font-family="Liberation Sans" font-size="7.0" font-weight="normal" fill="#b4b4b4" >Shape Outline</text>
<path d="M713.70,63.55 L714.80,64.65 L715.90,63.55" fill="none" stroke="#b8b8b8" stroke-width="0.6" />
<ellipse cx="665.4" cy="78.2" rx="3.8" ry="2.8" fill="none" stroke="#a8a8a8" stroke-width="0.6"/>
<line x1="662.60" y1="79.80" x2="668.40" y2="76.40" stroke="#a8a8a8" stroke-width="0.6" />
<text x="671.90" y="80.52" textLength="37.10" lengthAdjust="spacingAndGlyphs" xml:space="preserve" font-family="Liberation Sans" font-size="7.0" font-weight="normal" fill="#b4b4b4" >Shape Effects</text>
<path d="M711.80,77.55 L712.90,78.65 L714.00,77.55" fill="none" stroke="#b8b8b8" stroke-width="0.6" />
<circle cx="736.40" cy="48.40" r="2.80" fill="none" stroke="#555" stroke-width="0.8"/>
<line x1="734.40" y1="50.40" x2="731.20" y2="53.60" stroke="#555" stroke-width="0.9" />
<text x="741.40" y="52.82" textLength="12.00" lengthAdjust="spacingAndGlyphs" xml:space="preserve" font-family="Liberation Sans" font-size="7.0" font-weight="normal" fill="#303030" stroke="#303030" stroke-width="0.14">Find</text>
<text x="733.60" y="62.22" textLength="3.80" lengthAdjust="spacingAndGlyphs" xml:space="preserve" font-family="Liberation Sans" font-size="5.6" font-weight="normal" fill="#b146c2" stroke="#b146c2" stroke-width="0.1">b</text>
<text x="735.80" y="68.62" textLength="3.60" lengthAdjust="spacingAndGlyphs" xml:space="preserve" font-family="Liberation Sans" font-size="5.6" font-weight="normal" fill="#2b88d8" stroke="#2b88d8" stroke-width="0.1">c</text>
<path d="M732.4,61.6 C730.2,62.4 730.0,65.2 732.0,66.0 L734.0,66.0 M732.6,64.8 L734.0,66.0 L732.6,67.2" fill="none" stroke="#2b88d8" stroke-width="0.7" />
<text x="741.70" y="66.92" textLength="21.30" lengthAdjust="spacingAndGlyphs" xml:space="preserve" font-family="Liberation Sans" font-size="7.0" font-weight="normal" fill="#303030" stroke="#303030" stroke-width="0.14">Replace</text>
<path d="M770.10,63.60 L771.30,64.80 L772.50,63.60" fill="none" stroke="#444" stroke-width="0.7" />
<path d="M731.8,74.2 L737.2,78.4 L734.6,78.8 L735.8,81.6 L734.6,82.0 L733.4,79.4 L731.8,80.8 Z" fill="#ffffff" stroke="#555" stroke-width="0.6" />
<text x="741.40" y="80.92" textLength="16.40" lengthAdjust="spacingAndGlyphs" xml:space="preserve" font-family="Liberation Sans" font-size="7.0" font-weight="normal" fill="#303030" stroke="#303030" stroke-width="0.14">Select</text>
<path d="M760.10,77.70 L761.30,78.90 L762.50,77.70" fill="none" stroke="#444" stroke-width="0.7" />
<rect x="790.40" y="46.60" width="14.40" height="14.60" rx="1" fill="#f2ad95" stroke="#e06c4a" stroke-width="1.1"/>
<rect x="792.20" y="48.40" width="4.60" height="4.60" rx="0" fill="#fdf3ef" stroke="#e06c4a" stroke-width="0.8"/>
<rect x="798.20" y="48.40" width="4.60" height="4.60" rx="0" fill="#fdf3ef" stroke="#e06c4a" stroke-width="0.8"/>
<rect x="792.20" y="54.60" width="4.60" height="4.60" rx="0" fill="#fdf3ef" stroke="#e06c4a" stroke-width="0.8"/>
<rect x="798.20" y="54.60" width="4.60" height="4.60" rx="0" fill="#fdf3ef" stroke="#e06c4a" stroke-width="0.8"/>
<text x="786.30" y="70.72" textLength="22.50" lengthAdjust="spacingAndGlyphs" xml:space="preserve" font-family="Liberation Sans" font-size="7.0" font-weight="normal" fill="#303030" stroke="#303030" stroke-width="0.14">Add-ins</text>
<rect x="0.00" y="95.20" width="1024.00" height="506.80" rx="0" fill="#efefef" />
<rect x="163.40" y="95.20" width="11.40" height="506.80" rx="0" fill="#f4f4f4" />
<rect x="174.80" y="95.20" width="1.60" height="506.80" rx="0" fill="#e6e6e6" />
<path d="M166.4,101.0 L168.7,97.8 L171.0,101.0 Z" fill="#6e6e6e" stroke="none" stroke-width="1" />
<rect x="166.30" y="103.80" width="4.80" height="101.80" rx="2.4" fill="#6e6e6e" />
<path d="M166.6,595.8 L168.9,599.4 L171.2,595.8 Z" fill="#6e6e6e" stroke="none" stroke-width="1" />
<rect x="1014.80" y="95.20" width="9.20" height="506.80" rx="0" fill="#f4f4f4" />
<path d="M1017.2,101.0 L1019.5,97.8 L1021.8,101.0 Z" fill="#6e6e6e" stroke="none" stroke-width="1" />
<rect x="1017.00" y="103.60" width="5.00" height="32.80" rx="2.5" fill="#6e6e6e" />
<path d="M1017.2,565.6 L1019.5,569.0 L1021.8,565.6 Z" fill="#6e6e6e" stroke="none" stroke-width="1" />
<path d="M1019.5,573.0 L1017.4,575.6 L1018.6,575.6 L1018.6,578.8 L1020.4,578.8 L1020.4,575.6 L1021.6,575.6 Z" fill="#6e6e6e" stroke="none" stroke-width="1" />
<path d="M1019.5,588.2 L1017.4,585.4 L1018.6,585.4 L1018.6,582.2 L1020.4,582.2 L1020.4,585.4 L1021.6,585.4 Z" fill="#6e6e6e" stroke="none" stroke-width="1" />
<rect x="186.5" y="116.5" width="819.0" height="462.0" fill="#e2e2e2" filter="url(#ssh)"/>
<rect x="187.00" y="117.00" width="409.00" height="461.00" rx="0" fill="#a9c3e8" />
<rect x="596.00" y="117.00" width="409.00" height="461.00" rx="0" fill="#f4cdcd" />
<path d="M288.0,578.0 L288.0,496.7 A308.3,294.5 0 0 1 904.6,496.7 L904.6,578.0 Z" fill="#1d2b8e" stroke="none" stroke-width="1" />
<path d="M368.4,117.0 L823.8,117.0 L823.8,251.5 A227.7,227.7 0 0 1 368.4,251.5 Z" fill="#fbf8f4" stroke="none" stroke-width="1" />
<path d="M368.4,117.0 L823.8,117.0 L823.8,251.5 A227.7,227.7 0 0 1 368.4,251.5 Z" fill="#fcfaf7" stroke="none" stroke-width="1" clip-path="url(#topclip)"/>
<text x="455.90" y="245.64" textLength="280.80" lengthAdjust="spacingAndGlyphs" xml:space="preserve" font-family="Liberation Sans" font-size="30.6" font-weight="bold" fill="#1d2b8e" stroke="#1d2b8e" stroke-width="1.2">HOW TO CREATE</text>
<text x="408.40" y="282.44" textLength="374.20" lengthAdjust="spacingAndGlyphs" xml:space="preserve" font-family="Liberation Sans" font-size="30.6" font-weight="bold" fill="#1d2b8e" stroke="#1d2b8e" stroke-width="1.2">A COMPARISON SLIDE</text>
<text x="532.20" y="319.14" textLength="129.20" lengthAdjust="spacingAndGlyphs" xml:space="preserve" font-family="Liberation Sans" font-size="30.6" font-weight="bold" fill="#1d2b8e" stroke="#1d2b8e" stroke-width="1.2">IN PPT?</text>
<text x="6.20" y="110.02" textLength="4.40" lengthAdjust="spacingAndGlyphs" xml:space="preserve" font-family="Liberation Sans" font-size="8.4" font-weight="normal" fill="#c43e1c" stroke-width="0">1</text>
<text x="6.20" y="196.62" textLength="4.40" lengthAdjust="spacingAndGlyphs" xml:space="preserve" font-family="Liberation Sans" font-size="8.4" font-weight="normal" fill="#555555" stroke-width="0">2</text>
<rect x="18.4" y="191.0" width="134.79999999999998" height="76.4" rx="2" fill="#d9d9d9" filter="url(#tsh)"/>
<text x="6.20" y="283.02" textLength="4.40" lengthAdjust="spacingAndGlyphs" xml:space="preserve" font-family="Liberation Sans" font-size="8.4" font-weight="normal" fill="#555555" stroke-width="0">3</text>
<rect x="18.4" y="277.4" width="134.79999999999998" height="76.4" rx="2" fill="#d9d9d9" filter="url(#tsh)"/>
<text x="6.20" y="369.52" textLength="4.40" lengthAdjust="spacingAndGlyphs" xml:space="preserve" font-family="Liberation Sans" font-size="8.4" font-weight="normal" fill="#555555" stroke-width="0">4</text>
<rect x="18.4" y="363.9" width="134.79999999999998" height="76.4" rx="2" fill="#d9d9d9" filter="url(#tsh)"/>
<text x="6.20" y="455.62" textLength="4.40" lengthAdjust="spacingAndGlyphs" xml:space="preserve" font-family="Liberation Sans" font-size="8.4" font-weight="normal" fill="#555555" stroke-width="0">5</text>
<rect x="18.4" y="450.0" width="134.79999999999998" height="76.4" rx="2" fill="#d9d9d9" filter="url(#tsh)"/>
<text x="6.20" y="542.02" textLength="4.40" lengthAdjust="spacingAndGlyphs" xml:space="preserve" font-family="Liberation Sans" font-size="8.4" font-weight="normal" fill="#555555" stroke-width="0">6</text>
<rect x="18.4" y="536.4" width="134.79999999999998" height="76.4" rx="2" fill="#d9d9d9" filter="url(#tsh)"/>
<g clip-path="url(#tc0)">
<g transform="translate(19.0,105.0) scale(0.16333) translate(-187.0,-117.0)">
<rect x="187.00" y="117.00" width="181.40" height="461.00" rx="0" fill="#a9c3e8" />
<rect x="368.40" y="117.00" width="636.60" height="461.00" rx="0" fill="#f4cdcd" />
<path d="M368.4,117.0 L823.8,117.0 L823.8,251.5 A227.7,227.7 0 0 1 368.4,251.5 Z" fill="#fbf8f4" stroke="none" stroke-width="1" />
<path d="M288.0,578.0 L288.0,496.7 A308.3,294.5 0 0 1 904.6,496.7 L904.6,578.0 Z" fill="#1d2b8e" stroke="none" stroke-width="1" />
<circle cx="596.10" cy="251.50" r="227.70" fill="#fbf8f4" />
</g>
<text x="63.00" y="125.78" textLength="45.80" lengthAdjust="spacing" xml:space="preserve" font-family="Liberation Sans" font-size="4.4" font-weight="bold" fill="#1d2b8e" stroke="#1d2b8e" stroke-width="0.3">HOW TO CREATE</text>
<text x="55.50" y="131.58" textLength="60.80" lengthAdjust="spacing" xml:space="preserve" font-family="Liberation Sans" font-size="4.4" font-weight="bold" fill="#1d2b8e" stroke="#1d2b8e" stroke-width="0.3">A COMPARISON SLIDE</text>
<text x="75.30" y="138.08" textLength="21.20" lengthAdjust="spacing" xml:space="preserve" font-family="Liberation Sans" font-size="4.4" font-weight="bold" fill="#1d2b8e" stroke="#1d2b8e" stroke-width="0.3">IN PPT?</text>
</g>
<rect x="18.0" y="104.0" width="135.6" height="77.2" rx="3.2" fill="none" stroke="#c43e1c" stroke-width="2"/>
<g clip-path="url(#tc1)">
<rect x="19.00" y="191.60" width="133.60" height="75.20" rx="0" fill="#fbf8f4" />
<path d="M90.4,191.6 L121.1,229.0 L121.1,191.6 Z" fill="#c8bd8b" stroke="none" stroke-width="1" />
<path d="M121.1,191.6 L121.1,229.0 L152.6,191.6 Z" fill="#d3d596" stroke="none" stroke-width="1" />
<path d="M90.4,266.8 L121.1,229.0 L121.1,266.8 Z" fill="#f4cccc" stroke="none" stroke-width="1" />
<path d="M121.1,266.8 L121.1,229.0 L152.6,266.8 Z" fill="#dd8888" stroke="none" stroke-width="1" />
<circle cx="107.10" cy="245.80" r="4.10" fill="#1d2b8e" />
<circle cx="143.40" cy="199.40" r="0.60" fill="#3a4aa0" />
<text x="30.20" y="218.60" textLength="23.10" lengthAdjust="spacing" xml:space="preserve" font-family="Liberation Sans" font-size="5.0" font-weight="bold" fill="#1d2b8e" stroke="#1d2b8e" stroke-width="0.3">AGENDA</text>
<text x="30.20" y="227.02" textLength="17.90" lengthAdjust="spacingAndGlyphs" xml:space="preserve" font-family="Liberation Serif" font-size="3.4" font-weight="normal" fill="#6e6e9c" stroke="#8a8ab4" stroke-width="0.12">Introduction</text>
<text x="30.20" y="232.92" textLength="28.60" lengthAdjust="spacingAndGlyphs" xml:space="preserve" font-family="Liberation Serif" font-size="3.4" font-weight="normal" fill="#6e6e9c" stroke="#8a8ab4" stroke-width="0.12">Building confidence</text>
<text x="30.20" y="238.82" textLength="31.80" lengthAdjust="spacingAndGlyphs" xml:space="preserve" font-family="Liberation Serif" font-size="3.4" font-weight="normal" fill="#6e6e9c" stroke="#8a8ab4" stroke-width="0.12">Engaging the audience</text>
<text x="30.20" y="244.72" textLength="15.00" lengthAdjust="spacingAndGlyphs" xml:space="preserve" font-family="Liberation Serif" font-size="3.4" font-weight="normal" fill="#6e6e9c" stroke="#8a8ab4" stroke-width="0.12">Visual aids</text>
<text x="30.20" y="250.62" textLength="31.80" lengthAdjust="spacingAndGlyphs" xml:space="preserve" font-family="Liberation Serif" font-size="3.4" font-weight="normal" fill="#6e6e9c" stroke="#8a8ab4" stroke-width="0.12">Final tips &amp; takeaways</text>
</g>
<g clip-path="url(#tc2)">
<rect x="19.00" y="278.00" width="133.60" height="75.20" rx="0" fill="#fbf8f4" />
<rect x="19.00" y="315.50" width="133.60" height="37.70" rx="0" fill="#d1d18f" />
<rect x="71.60" y="278.00" width="76.20" height="69.00" rx="0" fill="#fbf8f4" />
<circle cx="153.0" cy="278.0" r="26.3" fill="none" stroke="#f3cccc" stroke-width="9.4"/>
<circle cx="132.20" cy="288.70" r="4.20" fill="#1d2b8e" />
<rect x="24.20" y="278.00" width="47.20" height="69.00" rx="0" fill="#e3bcbf" />
<rect x="27.00" y="280.00" width="16.00" height="26.00" rx="0" fill="#f0d3d5" />
<rect x="47.00" y="280.00" width="18.00" height="24.00" rx="0" fill="#eccdd0" />
<rect x="43.00" y="278.00" width="1.40" height="30.00" rx="0" fill="#d7afb2" />
<rect x="65.50" y="278.00" width="2.50" height="69.00" rx="0" fill="#d9b0b3" />
<rect x="32.00" y="302.00" width="6.00" height="7.00" rx="0" fill="#c79a9e" />
<rect x="24.20" y="335.00" width="9.00" height="12.00" rx="0" fill="#3a2f30" />
<path d="M27.6,347.0 L28.6,322.0 C29.2,311.0 33.0,306.0 41.0,304.5 L52.0,304.5 C60.0,306.0 64.6,312.0 66.2,322.0 L68.6,336.0 L63.0,339.0 L62.0,347.0 Z" fill="#a88788" stroke="none" stroke-width="1" />
<path d="M41.6,347.0 L41.8,308.0 C44.0,305.5 53.0,305.5 55.0,308.0 L56.6,347.0 Z" fill="#141010" stroke="none" stroke-width="1" />
<ellipse cx="46.6" cy="295.6" rx="5.6" ry="7.4" fill="#3f2c2c"/>
<ellipse cx="44.6" cy="296.6" rx="2.6" ry="4.0" fill="#5a4242"/>
<rect x="43.00" y="301.00" width="7.50" height="4.50" rx="2" fill="#2a1c1c" />
<path d="M29.0,322.0 C28.0,328.0 32.0,332.0 38.0,330.0" fill="none" stroke="#987778" stroke-width="3.0" />
<ellipse cx="28.6" cy="318.0" rx="2.6" ry="2.0" fill="#4a3434"/>
<path d="M46.0,320.0 C50.0,323.0 58.0,322.0 62.0,318.0" fill="none" stroke="#9a7a7b" stroke-width="3.0" />
<ellipse cx="48.8" cy="318.6" rx="2.4" ry="1.8" fill="#5a4040"/>
<rect x="47.60" y="316.80" width="2.40" height="1.40" rx="0.7" fill="#f2d8da" />
<text x="82.60" y="313.69" textLength="42.10" lengthAdjust="spacing" xml:space="preserve" font-family="Liberation Sans" font-size="4.7" font-weight="bold" fill="#1d2b8e" stroke="#1d2b8e" stroke-width="0.3">THE POWER OF</text>
<text x="82.60" y="319.49" textLength="48.80" lengthAdjust="spacing" xml:space="preserve" font-family="Liberation Sans" font-size="4.7" font-weight="bold" fill="#1d2b8e" stroke="#1d2b8e" stroke-width="0.3">COMMUNICATION</text>
</g>
<g clip-path="url(#tc3)">
<rect x="19.00" y="364.50" width="133.60" height="75.20" rx="0" fill="#fbf8f4" />
<rect x="19.00" y="364.50" width="133.60" height="37.50" rx="0" fill="#f3cbcc" />
<path d="M19.0,439.7 L19.0,403.0 L24.0,400.5 L24.0,439.7 Z" fill="#a9c3e8" stroke="none" stroke-width="1" />
<rect x="23.90" y="369.00" width="76.30" height="69.80" rx="0" fill="#fbf8f4" />
<path d="M80.0,439.7 L100.2,420.5 L100.2,439.7 Z" fill="#f1efdf" stroke="none" stroke-width="1" />
<rect x="100.20" y="369.00" width="47.50" height="69.80" rx="0" fill="#7f98b2" />
<rect x="100.20" y="369.00" width="10.00" height="50.00" rx="0" fill="#5f7590" />
<rect x="110.00" y="369.00" width="37.70" height="10.00" rx="0" fill="#8ea6bf" />
<rect x="112.00" y="372.50" width="1.20" height="40.00" rx="0" fill="#a9bccf" />
<rect x="138.00" y="390.50" width="9.00" height="6.00" rx="0" fill="#9fb4c8" />
<circle cx="142.00" cy="387.10" r="1.50" fill="#c5d4e2" />
<circle cx="143.60" cy="412.50" r="2.20" fill="#b8c8d8" />
<rect x="100.20" y="409.50" width="18.00" height="16.00" rx="0" fill="#2e3846" />
<rect x="100.20" y="423.00" width="47.50" height="11.00" rx="0" fill="#4d5a6c" />
<rect x="100.20" y="424.50" width="47.50" height="1.20" rx="0" fill="#8a9bb0" />
<rect x="100.20" y="433.50" width="47.50" height="5.30" rx="0" fill="#2a3240" />
<rect x="136.00" y="410.50" width="11.70" height="13.00" rx="0" fill="#9db0c4" />
<path d="M117.4,420.5 L118.0,398.5 C118.6,389.5 125.0,386.5 130.0,388.5 C135.0,391.5 136.6,400.5 136.6,421.5 Z" fill="#c4d1df" stroke="none" stroke-width="1" />
<rect x="118.20" y="419.50" width="18.00" height="9.00" rx="0" fill="#1c222c" />
<path d="M126.0,373.0 C131.5,372.5 134.5,377.5 133.8,384.5 C134.6,389.5 136.0,394.5 135.0,400.5 L132.6,390.5 C131.0,384.5 128.0,378.5 126.0,376.5 Z" fill="#2a303c" stroke="none" stroke-width="1" />
<ellipse cx="126.8" cy="379.9" rx="3.6" ry="5.0" fill="#cfdbe8"/>
<path d="M101.0,409.9 L108.4,401.9 L117.0,414.5 L111.0,422.5 Z" fill="#6d829c" stroke="none" stroke-width="1" />
<rect x="116.60" y="398.10" width="2.00" height="8.00" rx="0.8" fill="#1a1f28" />
<path d="M130.0,400.5 C129.0,408.5 124.0,412.5 117.0,411.5" fill="none" stroke="#b3c2d2" stroke-width="3.0" />
<text x="30.20" y="395.89" textLength="38.20" lengthAdjust="spacing" xml:space="preserve" font-family="Liberation Sans" font-size="4.7" font-weight="bold" fill="#1d2b8e" stroke="#1d2b8e" stroke-width="0.3">OVERCOMING</text>
<text x="30.20" y="401.69" textLength="42.10" lengthAdjust="spacing" xml:space="preserve" font-family="Liberation Sans" font-size="4.7" font-weight="bold" fill="#1d2b8e" stroke="#1d2b8e" stroke-width="0.3">NERVOUSNESS</text>
<text x="30.20" y="408.85" textLength="42.80" lengthAdjust="spacingAndGlyphs" xml:space="preserve" font-family="Liberation Serif" font-size="3.5" font-weight="normal" fill="#6e6e9c" stroke="#8a8ab4" stroke-width="0.12">Confidence-building strategies</text>
</g>
<g clip-path="url(#tc4)">
<rect x="19.00" y="450.60" width="133.60" height="75.20" rx="0" fill="#fbf8f4" />
<circle cx="46.70" cy="450.00" r="28.00" fill="#e9edf3" />
<rect x="19.00" y="450.60" width="28.00" height="75.20" rx="0" fill="#d2d394" />
<circle cx="46.70" cy="450.00" r="28.00" fill="#d8daa0" clip-path="url(#c5l)"/>
<g clip-path="url(#c5l)">
<circle cx="46.7" cy="450.0" r="4" fill="none" stroke="#e6e8c0" stroke-width="0.5"/>
<circle cx="46.7" cy="450.0" r="7" fill="none" stroke="#e6e8c0" stroke-width="0.5"/>
<circle cx="46.7" cy="450.0" r="10" fill="none" stroke="#e6e8c0" stroke-width="0.5"/>
<circle cx="46.7" cy="450.0" r="13" fill="none" stroke="#e6e8c0" stroke-width="0.5"/>
<circle cx="46.7" cy="450.0" r="16" fill="none" stroke="#e6e8c0" stroke-width="0.5"/>
<circle cx="46.7" cy="450.0" r="19" fill="none" stroke="#e6e8c0" stroke-width="0.5"/>
<circle cx="46.7" cy="450.0" r="22" fill="none" stroke="#e6e8c0" stroke-width="0.5"/>
<circle cx="46.7" cy="450.0" r="25" fill="none" stroke="#e6e8c0" stroke-width="0.5"/>
</g>
<path d="M19.0,497.20000000000005 L47.0,525.8000000000001 L19.0,525.8000000000001 Z" fill="#f4cccc" stroke="none" stroke-width="1" />
<path d="M47.0,497.20000000000005 L33.2,511.5 L47.0,525.8000000000001 Z" fill="#d9ab86" stroke="none" stroke-width="1" />
<circle cx="143.40" cy="458.60" r="0.60" fill="#3a4aa0" />
<text x="58.10" y="471.53" textLength="73.90" lengthAdjust="spacing" xml:space="preserve" font-family="Liberation Sans" font-size="4.8" font-weight="bold" fill="#1d2b8e" stroke="#1d2b8e" stroke-width="0.3">ENGAGING THE AUDIENCE</text>
<circle cx="58.60" cy="477.10" r="0.40" fill="#6a6a9a" />
<text x="61.80" y="477.97" textLength="74.00" lengthAdjust="spacingAndGlyphs" xml:space="preserve" font-family="Liberation Serif" font-size="2.9" font-weight="normal" fill="#6e6e9c" stroke="#8a8ab4" stroke-width="0.1">Make eye contact with your audience to create a sense of intimacy and</text>
<text x="61.80" y="480.87" textLength="12.70" lengthAdjust="spacingAndGlyphs" xml:space="preserve" font-family="Liberation Serif" font-size="2.9" font-weight="normal" fill="#6e6e9c" stroke="#8a8ab4" stroke-width="0.1">involvement</text>
<circle cx="58.60" cy="484.40" r="0.40" fill="#6a6a9a" />
<text x="61.80" y="485.27" textLength="76.10" lengthAdjust="spacingAndGlyphs" xml:space="preserve" font-family="Liberation Serif" font-size="2.9" font-weight="normal" fill="#6e6e9c" stroke="#8a8ab4" stroke-width="0.1">Share relatable stories into your presentation using narratives that make</text>
<text x="61.80" y="488.57" textLength="42.80" lengthAdjust="spacingAndGlyphs" xml:space="preserve" font-family="Liberation Serif" font-size="2.9" font-weight="normal" fill="#6e6e9c" stroke="#8a8ab4" stroke-width="0.1">your message memorable and impactful</text>
<circle cx="58.60" cy="492.30" r="0.40" fill="#6a6a9a" />
<text x="61.80" y="493.17" textLength="79.70" lengthAdjust="spacingAndGlyphs" xml:space="preserve" font-family="Liberation Serif" font-size="2.9" font-weight="normal" fill="#6e6e9c" stroke="#8a8ab4" stroke-width="0.1">Encourage questions and provide thoughtful responses to enhance audience</text>
<text x="61.80" y="496.27" textLength="5.40" lengthAdjust="spacingAndGlyphs" xml:space="preserve" font-family="Liberation Serif" font-size="2.9" font-weight="normal" fill="#6e6e9c" stroke="#8a8ab4" stroke-width="0.1">participation</text>
<circle cx="58.60" cy="499.40" r="0.40" fill="#6a6a9a" />
<text x="61.80" y="500.27" textLength="80.90" lengthAdjust="spacingAndGlyphs" xml:space="preserve" font-family="Liberation Serif" font-size="2.9" font-weight="normal" fill="#6e6e9c" stroke="#8a8ab4" stroke-width="0.1">Use live polls or surveys to gather audience opinions, promoting engagement</text>
<text x="61.80" y="503.67" textLength="45.70" lengthAdjust="spacingAndGlyphs" xml:space="preserve" font-family="Liberation Serif" font-size="2.9" font-weight="normal" fill="#6e6e9c" stroke="#8a8ab4" stroke-width="0.1">and making sure the audience feel involved</text>
</g>
<g clip-path="url(#tc5)">
<rect x="19.00" y="537.00" width="133.60" height="75.20" rx="0" fill="#fbf8f4" />
<rect x="19.00" y="537.00" width="18.80" height="75.20" rx="0" fill="#a9c3e8" />
<rect x="37.80" y="537.00" width="18.80" height="75.20" rx="0" fill="#f4cdd0" />
<circle cx="37.80" cy="593.30" r="18.50" fill="#1d2b8e" />
<path d="M37.8,593.3 L37.8,574.8 A18.5,18.5 0 0 1 56.3,593.3 Z" fill="#a9c3e8" stroke="none" stroke-width="1" />
<circle cx="143.40" cy="544.80" r="0.60" fill="#3a4aa0" />
<text x="68.30" y="568.59" textLength="31.30" lengthAdjust="spacing" xml:space="preserve" font-family="Liberation Sans" font-size="4.7" font-weight="bold" fill="#1d2b8e" stroke="#1d2b8e" stroke-width="0.3">SELECTING</text>
<text x="68.30" y="574.59" textLength="35.20" lengthAdjust="spacing" xml:space="preserve" font-family="Liberation Sans" font-size="4.7" font-weight="bold" fill="#1d2b8e" stroke="#1d2b8e" stroke-width="0.3">VISUAL AIDS</text>
<text x="68.30" y="581.45" textLength="40.60" lengthAdjust="spacingAndGlyphs" xml:space="preserve" font-family="Liberation Serif" font-size="3.5" font-weight="normal" fill="#7e7eaa" stroke="#9a9ac0" stroke-width="0.1">Enhancing your presentation</text>
</g>
<rect x="0.00" y="601.80" width="1024.00" height="12.20" rx="0" fill="#f5f5f5" />
<rect x="0.00" y="601.00" width="1024.00" height="1.00" rx="0" fill="#e3e3e3" />
<text x="6.60" y="610.35" textLength="33.40" lengthAdjust="spacingAndGlyphs" xml:space="preserve" font-family="Liberation Sans" font-size="6.8" font-weight="normal" fill="#4a4a4a" stroke="#4a4a4a" stroke-width="0.14">Slide 1 of 14</text>
<path d="M50.4,604.6 L53.6,605.2 L56.8,604.6 L56.8,610.6 L53.6,611.2 L50.4,610.6 Z M53.6,605.2 L53.6,611.2" fill="none" stroke="#555" stroke-width="0.7" />
<text x="67.20" y="610.35" textLength="38.40" lengthAdjust="spacingAndGlyphs" xml:space="preserve" font-family="Liberation Sans" font-size="6.8" font-weight="normal" fill="#4a4a4a" stroke="#4a4a4a" stroke-width="0.14">English (India)</text>
<path d="M141.0,604.0 L141.0,611.4 M138.0,605.6 L144.0,605.6 M139.2,611.4 L142.8,611.4" fill="none" stroke="#555" stroke-width="0.7" />
<path d="M141.8,609.2 L142.8,610.4 L145.0,607.6" fill="none" stroke="#555" stroke-width="0.7" />
<text x="147.50" y="610.35" textLength="67.50" lengthAdjust="spacingAndGlyphs" xml:space="preserve" font-family="Liberation Sans" font-size="6.8" font-weight="normal" fill="#4a4a4a" stroke="#4a4a4a" stroke-width="0.14">Accessibility: Good to go</text>
<path d="M797.8,603.6 L799.2,602.6 L800.6,603.6" fill="none" stroke="#666" stroke-width="0.6" />
<line x1="794.20" y1="605.20" x2="803.00" y2="605.20" stroke="#8a8a8a" stroke-width="0.8" />
<line x1="794.20" y1="606.80" x2="803.00" y2="606.80" stroke="#8a8a8a" stroke-width="0.8" />
<line x1="794.20" y1="608.40" x2="803.00" y2="608.40" stroke="#8a8a8a" stroke-width="0.8" />
<line x1="794.20" y1="610.00" x2="803.00" y2="610.00" stroke="#8a8a8a" stroke-width="0.8" />
<text x="804.00" y="610.75" textLength="15.30" lengthAdjust="spacingAndGlyphs" xml:space="preserve" font-family="Liberation Sans" font-size="6.8" font-weight="normal" fill="#4a4a4a" stroke="#4a4a4a" stroke-width="0.14">Notes</text>
<rect x="830.20" y="602.20" width="20.70" height="11.80" rx="0" fill="#dedede" />
<rect x="837.00" y="604.00" width="7.40" height="6.60" rx="0" fill="none" stroke="#555" stroke-width="0.8"/>
<rect x="838.60" y="605.40" width="4.20" height="2.20" rx="0" fill="#6a6a6a" />
<rect x="858.40" y="603.80" width="3.20" height="3.00" rx="0" fill="none" stroke="#555" stroke-width="0.7"/>
<rect x="862.60" y="603.80" width="3.20" height="3.00" rx="0" fill="none" stroke="#555" stroke-width="0.7"/>
<rect x="858.40" y="608.00" width="3.20" height="3.00" rx="0" fill="none" stroke="#555" stroke-width="0.7"/>
<rect x="862.60" y="608.00" width="3.20" height="3.00" rx="0" fill="none" stroke="#555" stroke-width="0.7"/>
<path d="M879.2,604.0 L882.9,604.6 L886.6,604.0 L886.6,610.8 L882.9,611.4 L879.2,610.8 Z M882.9,604.6 L882.9,611.4" fill="none" stroke="#555" stroke-width="0.7" />
<rect x="901.40" y="603.60" width="6.40" height="4.80" rx="0" fill="none" stroke="#555" stroke-width="0.8"/>
<line x1="904.60" y1="608.40" x2="904.60" y2="611.40" stroke="#555" stroke-width="0.8" />
<line x1="902.60" y1="611.60" x2="906.60" y2="611.60" stroke="#555" stroke-width="0.8" />
<line x1="918.80" y1="608.00" x2="922.40" y2="608.00" stroke="#666" stroke-width="0.7" />
<line x1="925.40" y1="608.00" x2="978.70" y2="608.00" stroke="#777" stroke-width="0.7" />
<rect x="952.00" y="605.00" width="3.00" height="6.00" rx="1" fill="#555" />
<line x1="981.40" y1="608.00" x2="985.40" y2="608.00" stroke="#666" stroke-width="0.7" />
<line x1="983.40" y1="606.00" x2="983.40" y2="610.00" stroke="#666" stroke-width="0.7" />
<text x="993.00" y="610.38" textLength="13.80" lengthAdjust="spacingAndGlyphs" xml:space="preserve" font-family="Liberation Sans" font-size="6.6" font-weight="normal" fill="#4a4a4a" stroke="#4a4a4a" stroke-width="0.14">120%</text>
<path d="M1017.1,603.6 L1019.6,606.0 L1017.1,608.4 L1014.6,606.0 Z" fill="none" stroke="#555" stroke-width="0.7" transform="translate(0,2)"/>
<path d="M1017.1,602.8 L1017.1,604.2 M1017.1,611.8 L1017.1,613.2 M1013.2,608.0 L1014.6,608.0 M1019.6,608.0 L1021.0,608.0" fill="none" stroke="#555" stroke-width="0.7" />
</svg>
</body></html>
